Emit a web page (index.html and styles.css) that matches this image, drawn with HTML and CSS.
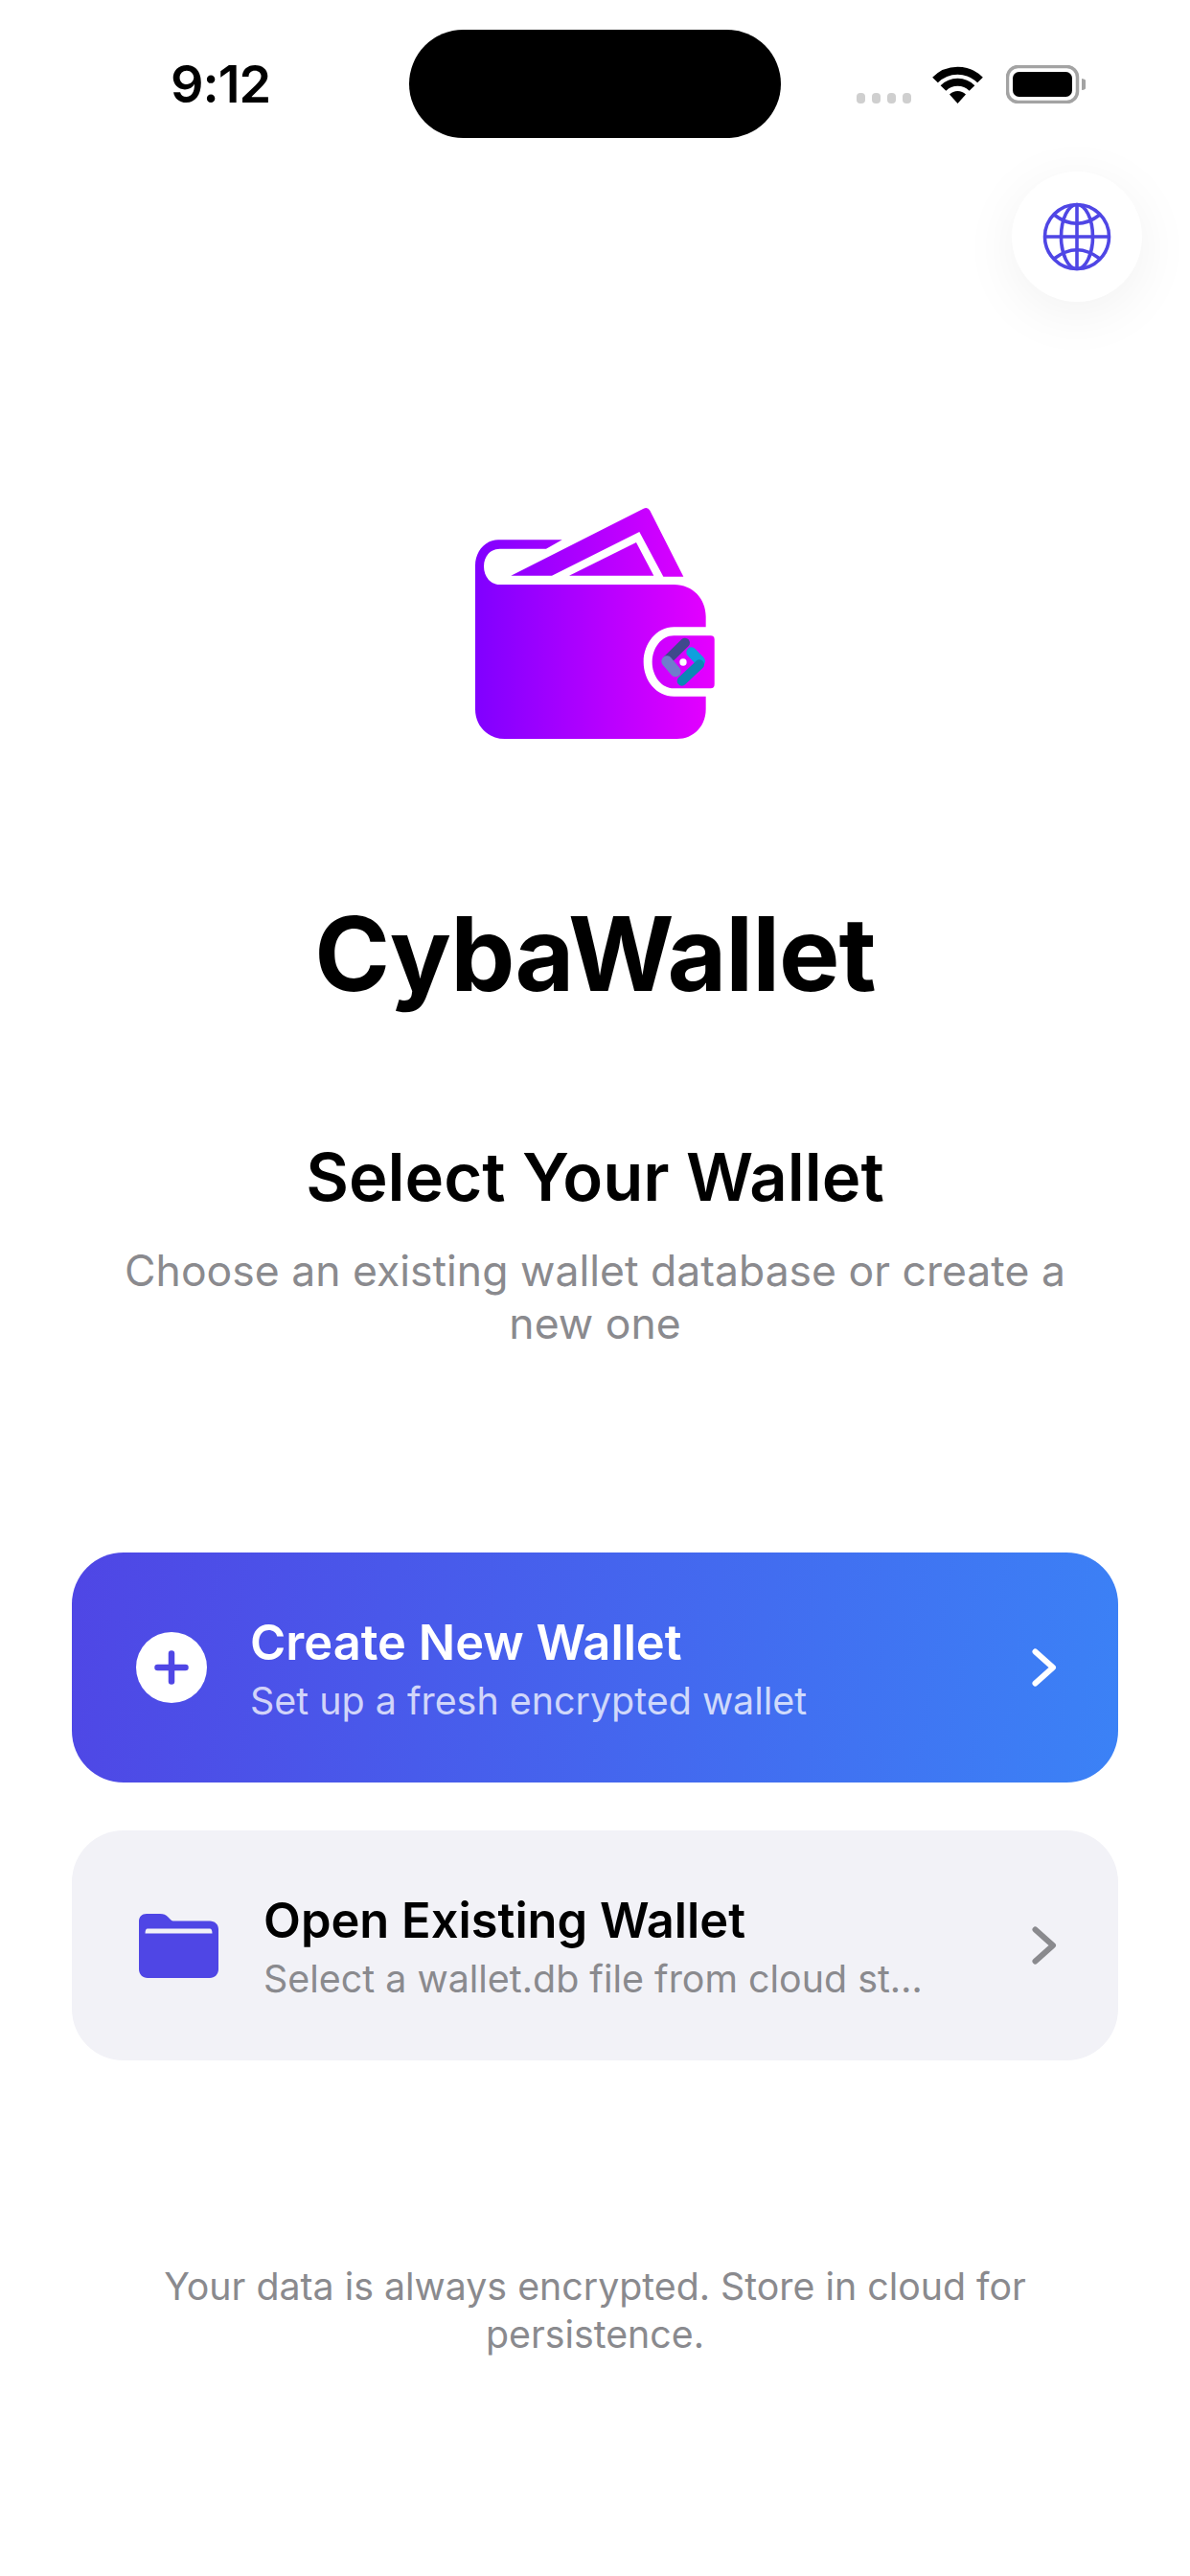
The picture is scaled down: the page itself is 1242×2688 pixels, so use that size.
FILE: index.html
```html
<!DOCTYPE html>
<html lang="en">

<head>
    <meta charset="UTF-8">
    <meta name="viewport" content="width=device-width, initial-scale=1.0">
    <title>CybaWallet</title>
    <link rel="stylesheet" href="styles.css">
</head>

<body>
    <div class="screen">
        <!-- Status bar -->
        <div class="status-bar">
            <span class="time">9:12</span>
            <div class="island"></div>
            <div class="status-icons">
                <div class="signal"><span></span><span></span><span></span><span></span></div>
                <svg class="wifi" viewBox="0 0 53 39" width="53" height="39">
                    <path d="M3 14.5 A33 33 0 0 1 50 14.5" fill="none" stroke="#000" stroke-width="8"/>
                    <path d="M11.5 23 A21 21 0 0 1 41.5 23" fill="none" stroke="#000" stroke-width="8"/>
                    <path d="M26.5 39 L18 29.5 A12 12 0 0 1 35 29.5 Z" fill="#000"/>
                </svg>
                <svg class="battery" viewBox="0 0 83 40" width="83" height="40">
                    <rect x="1.5" y="1.5" width="73" height="37" rx="11" fill="none" stroke="#a3a3a3" stroke-width="3.5"/>
                    <rect x="7" y="7" width="62" height="26" rx="6.5" fill="#000"/>
                    <path d="M79 14 A6 6 0 0 1 79 26 Z" fill="#a3a3a3"/>
                </svg>
            </div>
        </div>

        <!-- Language button -->
        <div class="top-row">
            <button class="globe-btn">
                <svg viewBox="-36 -36 72 72" width="72" height="72" fill="none" stroke="#4f46e5" stroke-width="3.6">
                    <circle cx="0" cy="0" r="33.5"/>
                    <ellipse cx="0" cy="0" rx="16.5" ry="33.5"/>
                    <line x1="0" y1="-33.5" x2="0" y2="33.5"/>
                    <line x1="-33.5" y1="0" x2="33.5" y2="0"/>
                    <path d="M-24 -23 Q0 -4.5 24 -23"/>
                    <path d="M-24 23 Q0 4.5 24 23"/>
                </svg>
            </button>
        </div>

        <!-- Logo -->
        <div class="hero">
            <svg class="logo" viewBox="78 60 750 723" width="250" height="241">
                <defs>
                    <linearGradient id="walletGrad" gradientUnits="userSpaceOnUse" x1="78" y1="0" x2="828" y2="0">
                        <stop offset="0" stop-color="#8000ff"/>
                        <stop offset="1" stop-color="#e600ff"/>
                    </linearGradient>
                </defs>
                <path fill="url(#walletGrad)" d="M150 160 H350 L300 188 H155 C125 188 105 212 105 243 C105 274 125 300 155 300 H700 C760 300 800 345 800 400 V433 H700 C645 433 605 485 605 542 C605 600 645 650 700 650 H800 V690 C800 745 760 783 710 783 H170 C120 783 78 745 78 690 V240 C78 195 110 160 150 160 Z"/>
                <path fill="url(#walletGrad)" d="M190 272 L605 62 Q618 56 625 68 L730 275 H667 L592 135 L318 272 Z"/>
                <path fill="url(#walletGrad)" d="M372 272 L582 168 L637 272 Z"/>
                <path fill="url(#walletGrad)" d="M700 460 H815 Q827 460 827 472 V612 Q827 625 815 625 H700 C660 625 632 585 632 542 C632 500 660 460 700 460 Z"/>
                <path d="M735 482 L680 536" fill="none" stroke="#3f4a8c" stroke-width="30" stroke-linecap="round"/>
                <path d="M678 540 L705 572" fill="none" stroke="#6f7dcb" stroke-width="34" stroke-linecap="round"/>
                <path d="M755 512 L782 540" fill="none" stroke="#0e9fdd" stroke-width="32" stroke-linecap="round"/>
                <path d="M780 550 L725 602" fill="none" stroke="#0b87b5" stroke-width="30" stroke-linecap="round"/>
                <circle cx="729" cy="543" r="11" fill="#fff"/>
            </svg>
            <h1>CybaWallet</h1>
            <h2>Select Your Wallet</h2>
            <p class="intro">Choose an existing wallet database or create a<br>new one</p>
        </div>

        <!-- Actions -->
        <div class="actions">
            <div class="card card-primary">
                <span class="plus-icon">
                    <svg viewBox="0 0 36 36" width="36" height="36" fill="none" stroke="#4f46e5" stroke-width="6.5" stroke-linecap="round">
                        <line x1="3.5" y1="18" x2="32.5" y2="18"/>
                        <line x1="18" y1="3.5" x2="18" y2="32.5"/>
                    </svg>
                </span>
                <div class="card-text">
                    <div class="card-title">Create New Wallet</div>
                    <div class="card-sub">Set up a fresh encrypted wallet</div>
                </div>
                <svg class="chevron" viewBox="0 0 26 40" width="26" height="40" fill="none" stroke="#fff" stroke-width="6" stroke-linecap="round" stroke-linejoin="round">
                    <path d="M3.5 3.5 L22 20 L3.5 36.5"/>
                </svg>
            </div>

            <div class="card card-secondary">
                <svg class="folder-icon" viewBox="0 0 83 67" width="83" height="67">
                    <path fill="#4f46e5" d="M8 0 H22 C26 0 28 1 30 3 L33 6 C34 7 35 7.500 37 7.500 H74 C79 7.500 83 11 83 16 V58 C83 63 79 67 74 67 H9 C4 67 0 63 0 58 V8 C0 3 3 0 8 0 Z"/>
                    <path fill="#f2f2f7" d="M9 15.500 C7.500 15.500 6.500 17 6.500 20.500 H76.500 C76.500 17 75.500 15.500 74 15.500 Z"/>
                </svg>
                <div class="card-text">
                    <div class="card-title">Open Existing Wallet</div>
                    <div class="card-sub">Select a wallet.db file from cloud st…</div>
                </div>
                <svg class="chevron" viewBox="0 0 26 40" width="26" height="40" fill="none" stroke="#8a8a8e" stroke-width="6" stroke-linecap="round" stroke-linejoin="round">
                    <path d="M3.5 3.5 L22 20 L3.5 36.5"/>
                </svg>
            </div>
        </div>

        <footer>Your data is always encrypted. Store in cloud for<br>persistence.</footer>
    </div>
</body>

</html>
```

FILE: styles.css
```css
/* Page */
body {
    margin: 0;
    background-color: #fff;
    font-family: 'Inter', 'Noto Sans', sans-serif;
    color: #000;
}

.screen {
    width: 1242px;
    height: 2688px;
    overflow: hidden;
    position: relative;
}

/* Status bar */
.status-bar {
    height: 179px;
    box-sizing: border-box;
    padding: 56px 109px 0 178px;
    display: flex;
    justify-content: space-between;
    align-items: flex-start;
}

.time {
    font-size: 54px;
    font-weight: 600;
    line-height: 64px;
    letter-spacing: -1px;
}

.island {
    position: absolute;
    left: 427px;
    top: 31px;
    width: 388px;
    height: 113px;
    border-radius: 57px;
    background-color: #000;
}

.status-icons {
    display: flex;
    align-items: flex-end;
    gap: 22px;
    margin-top: 12px;
}

.signal {
    display: flex;
    gap: 7px;
}

.signal span {
    width: 9px;
    height: 11px;
    border-radius: 4px;
    background-color: #cfcfcf;
}

.battery {
    margin-left: 2px;
}

/* Globe */
.top-row {
    display: flex;
    justify-content: flex-end;
    padding-right: 50px;
}

.globe-btn {
    width: 136px;
    height: 136px;
    padding: 0;
    border: none;
    border-radius: 50%;
    background-color: #fff;
    box-shadow: 0 12px 60px rgba(0, 0, 0, 0.06);
    display: flex;
    align-items: center;
    justify-content: center;
}

/* Hero */
.hero {
    display: flex;
    flex-direction: column;
    align-items: center;
    text-align: center;
    padding-top: 215px;
}

.logo {
    display: block;
}

h1 {
    margin: 160px 0 0;
    font-size: 106.6px;
    line-height: 130px;
    font-weight: 700;
    letter-spacing: -1px;
}

h2 {
    margin: 122px 0 0;
    font-size: 68.8px;
    line-height: 90px;
    font-weight: 600;
}

.intro {
    margin: 26px 0 0;
    font-size: 44.5px;
    line-height: 55px;
    color: #8a8a8e;
}

/* Cards */
.actions {
    margin: 211px 75px 0;
    display: flex;
    flex-direction: column;
    gap: 50px;
}

.card {
    height: 240px;
    border-radius: 54px;
    display: flex;
    align-items: center;
    box-sizing: border-box;
    padding: 0 64px 0 67px;
}

.card-primary {
    background: linear-gradient(100deg, #4f46e5, #3b82f6);
    color: #fff;
}

.card-secondary {
    background-color: #f2f2f7;
}

.plus-icon {
    width: 74px;
    height: 74px;
    border-radius: 50%;
    background-color: #fff;
    display: flex;
    align-items: center;
    justify-content: center;
    flex-shrink: 0;
    margin-right: 45px;
}

.folder-icon {
    flex-shrink: 0;
    margin: 0 47px 0 3px;
}

.card-text {
    flex: 1;
    min-width: 0;
    padding-top: 2px;
}

.card-title {
    font-size: 50.6px;
    line-height: 64px;
    font-weight: 600;
}

.card-sub {
    margin-top: 4px;
    font-size: 39.4px;
    line-height: 50px;
    white-space: nowrap;
}

.card-primary .card-sub {
    color: rgba(255, 255, 255, 0.75);
}

.card-secondary .card-sub {
    color: #8a8a8e;
}

.chevron {
    flex-shrink: 0;
}

/* Footer */
footer {
    margin-top: 211px;
    text-align: center;
    font-size: 39.3px;
    line-height: 50px;
    color: #8a8a8e;
}
```
